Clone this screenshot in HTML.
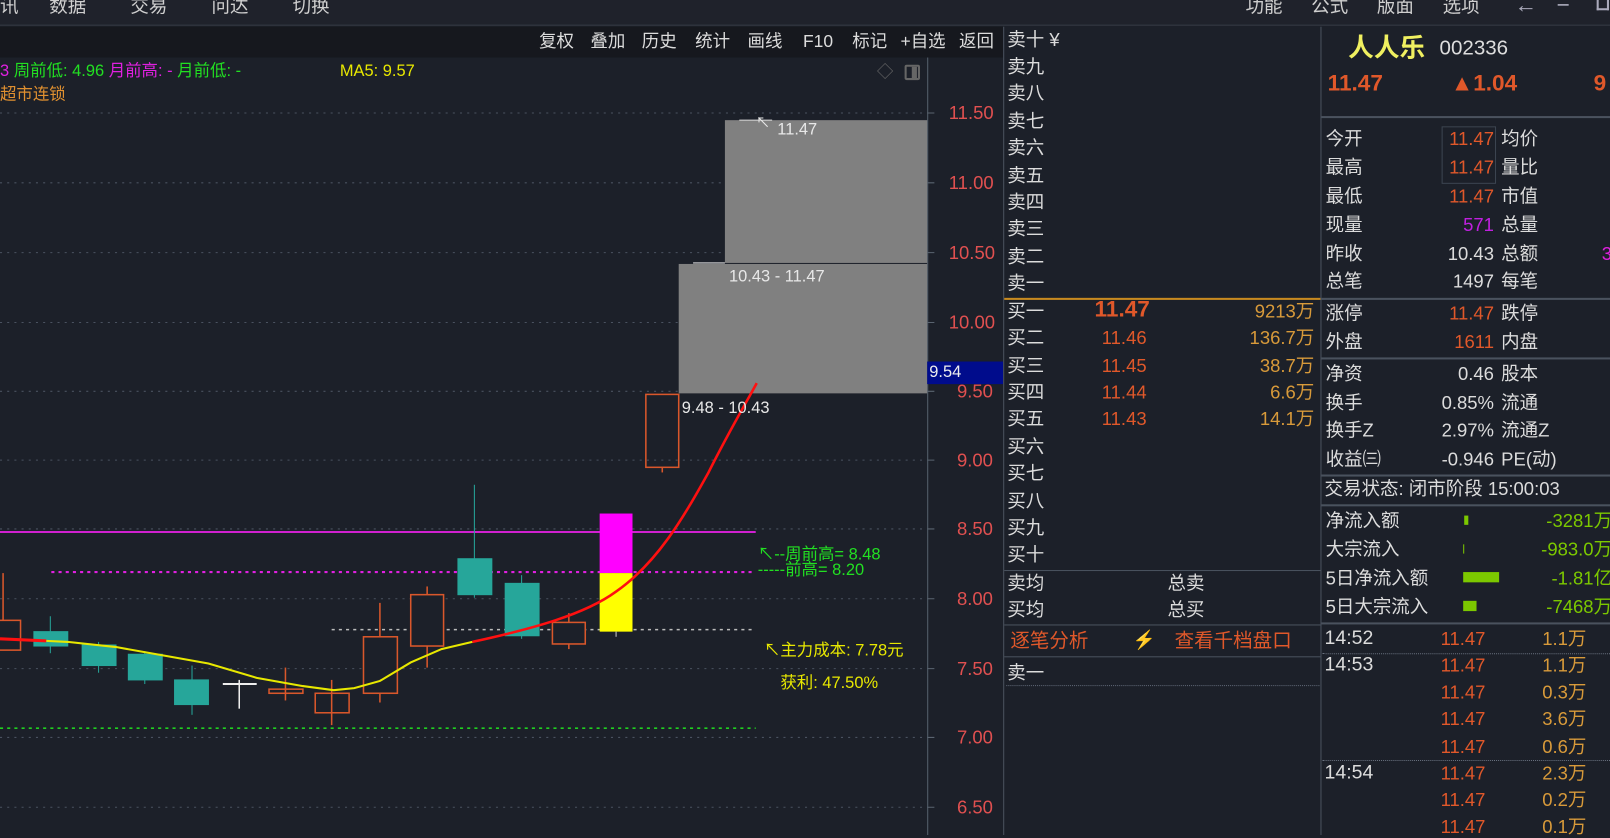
<!DOCTYPE html>
<html><head><meta charset="utf-8">
<style>
*{margin:0;padding:0;box-sizing:border-box}
html,body{width:1610px;height:835px;overflow:hidden;background:#1c2029}
#w{position:absolute;left:0;top:0;width:1568px;height:813px;transform:scale(1.02679,1.02706);transform-origin:0 0;background:#1c2029;font-family:"Liberation Sans","Noto Sans CJK SC",sans-serif;color:#dcdcdc}
.t{position:absolute;white-space:nowrap;font-size:18px;line-height:22px}
.r{text-align:right}
.hl{position:absolute;height:1px;background:#3c4450}
.vl{position:absolute;width:1px;background:#3c4450}
.dot{position:absolute;height:0;border-top:1px dotted #4a5260}
.o{color:#e0582a}.g{color:#d89a3a}.gr{color:#22e022}.m{color:#e020e0}.y{color:#e8e800}
.c{position:absolute}
</style></head><body><div id="w">
<div style="position:absolute;left:0;top:0;width:1568px;height:25px;background:#1f222b;border-bottom:1px solid #363c46"></div>
<div class="t" style="left:0;top:-5px;color:#cfcfcf">讯</div>
<div class="t" style="left:48px;top:-5px;color:#cfcfcf">数据</div>
<div class="t" style="left:127px;top:-5px;color:#cfcfcf">交易</div>
<div class="t" style="left:206px;top:-5px;color:#cfcfcf">问达</div>
<div class="t" style="left:285px;top:-5px;color:#cfcfcf">切换</div>
<div class="t" style="left:1213px;top:-5px;color:#cfcfcf">功能</div>
<div class="t" style="left:1277px;top:-5px;color:#cfcfcf">公式</div>
<div class="t" style="left:1341px;top:-5px;color:#cfcfcf">版面</div>
<div class="t" style="left:1405px;top:-5px;color:#cfcfcf">选项</div>
<div class="t" style="left:1475px;top:-6px;color:#aab;font-size:22px">←</div>
<div class="t" style="left:1516px;top:-6px;color:#aab;font-size:22px">−</div>
<div style="position:absolute;left:1555px;top:0;width:12px;height:10px;border:2px solid #aab;border-top:none"></div>
<div style="position:absolute;left:0;top:26px;width:977px;height:30px;background:#16181e"></div>
<div class="t" style="left:525px;top:30px;font-size:17px">复权</div>
<div class="t" style="left:575px;top:30px;font-size:17px">叠加</div>
<div class="t" style="left:625px;top:30px;font-size:17px">历史</div>
<div class="t" style="left:677px;top:30px;font-size:17px">统计</div>
<div class="t" style="left:728px;top:30px;font-size:17px">画线</div>
<div class="t" style="left:782px;top:30px;font-size:17px">F10</div>
<div class="t" style="left:830px;top:30px;font-size:17px">标记</div>
<div class="t" style="left:877px;top:30px;font-size:17px">+自选</div>
<div class="t" style="left:934px;top:30px;font-size:17px">返回</div>
<div class="t" style="left:0;top:59px;font-size:16px"><span class="m">3</span> <span class="gr">周前低: 4.96</span> <span class="m">月前高: -</span> <span class="gr">月前低: -</span></div>
<div class="t y" style="left:331px;top:59px;font-size:16px">MA5: 9.57</div>
<div class="t" style="left:0;top:82px;font-size:16px;color:#e09030">超市连锁</div>
<div class="t" style="left:854px;top:60px;color:#666;font-size:16px">◇</div>
<div style="position:absolute;left:881px;top:63px;width:15px;height:15px;border:2px solid #666;border-radius:2px"></div>
<div style="position:absolute;left:888px;top:65px;width:5px;height:11px;background:#666"></div>
<div class="vl" style="left:903px;top:56px;height:757px;background:#55606c"></div>
<svg class="c" style="left:0;top:0" width="978" height="813">
<g stroke="#4a5260" stroke-dasharray="2 5" stroke-width="1">
<line x1="0" y1="110" x2="903" y2="110"/><line x1="0" y1="178" x2="903" y2="178"/><line x1="0" y1="246" x2="903" y2="246"/><line x1="0" y1="314" x2="903" y2="314"/><line x1="0" y1="381" x2="903" y2="381"/><line x1="0" y1="448" x2="903" y2="448"/><line x1="0" y1="515" x2="903" y2="515"/><line x1="0" y1="583" x2="903" y2="583"/><line x1="0" y1="651" x2="903" y2="651"/><line x1="0" y1="718" x2="903" y2="718"/><line x1="0" y1="786" x2="903" y2="786"/>
</g>
<g stroke="#5a6470"><line x1="903" y1="110" x2="910" y2="110"/><line x1="903" y1="178" x2="910" y2="178"/><line x1="903" y1="246" x2="910" y2="246"/><line x1="903" y1="314" x2="910" y2="314"/><line x1="903" y1="381" x2="910" y2="381"/><line x1="903" y1="448" x2="910" y2="448"/><line x1="903" y1="515" x2="910" y2="515"/><line x1="903" y1="583" x2="910" y2="583"/><line x1="903" y1="651" x2="910" y2="651"/><line x1="903" y1="718" x2="910" y2="718"/><line x1="903" y1="786" x2="910" y2="786"/></g>
<rect x="706" y="117" width="197" height="139" fill="#808080"/>
<rect x="661" y="257" width="242" height="126" fill="#808080"/>
<line x1="720" y1="117" x2="752" y2="117" stroke="#ddd"/>
<line x1="675" y1="256" x2="706" y2="256" stroke="#ddd"/>
<line x1="0" y1="518" x2="736" y2="518" stroke="#d020d0" stroke-width="2"/>
<line x1="50" y1="557" x2="736" y2="557" stroke="#e020e0" stroke-width="2" stroke-dasharray="3 4"/>
<line x1="323" y1="613" x2="736" y2="613" stroke="#bbb" stroke-width="1.5" stroke-dasharray="3 4"/>
<line x1="0" y1="709" x2="736" y2="709" stroke="#20d020" stroke-width="1.5" stroke-dasharray="3 4"/>
<g stroke="#d9572b" stroke-width="1.5" fill="none">
<line x1="3" y1="558" x2="3" y2="604"/><rect x="-5" y="604" width="25" height="29"/>
<line x1="278" y1="650" x2="278" y2="682"/><rect x="262" y="671" width="33" height="4"/>
<line x1="323" y1="662" x2="323" y2="706"/><rect x="307" y="675" width="33" height="19"/>
<line x1="370" y1="587" x2="370" y2="684"/><rect x="354" y="620" width="33" height="55" fill="#1c2029"/>
<line x1="416" y1="571" x2="416" y2="650"/><rect x="400" y="579" width="32" height="50" fill="#1c2029"/>
<line x1="554" y1="597" x2="554" y2="632"/><rect x="538" y="606" width="32" height="21" fill="#1c2029"/>
<line x1="645" y1="455" x2="645" y2="460"/><rect x="629" y="384" width="32" height="71"/>
</g>
<g stroke="#26a69a" fill="#26a69a">
<line x1="49" y1="600" x2="49" y2="636"/><rect x="33" y="615" width="33" height="14"/>
<line x1="96" y1="625" x2="96" y2="655"/><rect x="80" y="628" width="33" height="20"/>
<line x1="141" y1="634" x2="141" y2="666"/><rect x="125" y="637" width="33" height="25"/>
<line x1="187" y1="648" x2="187" y2="696"/><rect x="170" y="662" width="33" height="24"/>
<line x1="462" y1="472" x2="462" y2="582"/><rect x="446" y="544" width="33" height="35"/>
<line x1="508" y1="560" x2="508" y2="622"/><rect x="492" y="568" width="33" height="51"/>
</g>
<line x1="217" y1="666" x2="250" y2="666" stroke="#eee" stroke-width="2"/><line x1="233" y1="662" x2="233" y2="690" stroke="#eee" stroke-width="1.5"/>
<rect x="584" y="500" width="32" height="58" fill="#ff00ff"/>
<rect x="584" y="558" width="32" height="57" fill="#ffff00"/>
<line x1="600" y1="615" x2="600" y2="620" stroke="#ccc"/>
<polyline points="45,624 66,625 113,630 158,638 203,646 250,660 295,668 325,672 345,670 370,663 400,645 430,632 460,625" fill="none" stroke="#e8e800" stroke-width="2"/>
<polyline points="0,622 45,624" fill="none" stroke="#ff1010" stroke-width="3"/>
<path d="M460,625 C520,612 570,598 600,576 C640,548 665,505 690,460 C710,420 725,395 737,373" fill="none" stroke="#ff1010" stroke-width="2.5"/>
</svg>
<div class="t" style="left:757px;top:116px;font-size:16px;color:#e8e8e8">11.47</div>
<div class="t" style="left:736px;top:108px;font-size:14px;color:#e8e8e8">↖</div>
<div class="t" style="left:710px;top:259px;font-size:16px;color:#e8e8e8">10.43 - 11.47</div>
<div class="t" style="left:664px;top:387px;font-size:16px;color:#e8e8e8">9.48 - 10.43</div>
<div class="t gr" style="left:738px;top:530px;font-size:16px">↖--周前高= 8.48</div>
<div class="t gr" style="left:738px;top:545px;font-size:16px">-----前高= 8.20</div>
<div class="t y" style="left:744px;top:623px;font-size:16px">↖主力成本: 7.78元</div>
<div class="t y" style="left:760px;top:655px;font-size:16px">获利: 47.50%</div>
<div class="t" style="left:924px;top:99px;color:#e05050">11.50</div>
<div class="t" style="left:924px;top:167px;color:#e05050">11.00</div>
<div class="t" style="left:924px;top:235px;color:#e05050">10.50</div>
<div class="t" style="left:924px;top:303px;color:#e05050">10.00</div>
<div class="t" style="left:932px;top:370px;color:#e05050">9.50</div>
<div class="t" style="left:932px;top:437px;color:#e05050">9.00</div>
<div class="t" style="left:932px;top:504px;color:#e05050">8.50</div>
<div class="t" style="left:932px;top:572px;color:#e05050">8.00</div>
<div class="t" style="left:932px;top:640px;color:#e05050">7.50</div>
<div class="t" style="left:932px;top:707px;color:#e05050">7.00</div>
<div class="t" style="left:932px;top:775px;color:#e05050">6.50</div>
<div style="position:absolute;left:903px;top:352px;width:74px;height:22px;background:#000c8c;color:#eee;font-size:16px;line-height:22px;padding-left:2px">9.54</div>
<div class="vl" style="left:977px;top:26px;height:787px;background:#4a525e"></div>
<div class="vl" style="left:1286px;top:26px;height:787px;background:#4a525e"></div>
<div class="t" style="left:981px;top:28px">卖十 ¥</div>
<div class="t" style="left:981px;top:54px">卖九</div>
<div class="t" style="left:981px;top:80px">卖八</div>
<div class="t" style="left:981px;top:107px">卖七</div>
<div class="t" style="left:981px;top:133px">卖六</div>
<div class="t" style="left:981px;top:160px">卖五</div>
<div class="t" style="left:981px;top:186px">卖四</div>
<div class="t" style="left:981px;top:212px">卖三</div>
<div class="t" style="left:981px;top:239px">卖二</div>
<div class="t" style="left:981px;top:265px">卖一</div>
<div class="hl" style="left:978px;top:290px;width:308px;height:2px;background:#c88a20"></div>
<div class="t" style="left:981px;top:292px">买一</div>
<div class="t" style="left:981px;top:318px">买二</div>
<div class="t" style="left:981px;top:345px">买三</div>
<div class="t" style="left:981px;top:371px">买四</div>
<div class="t" style="left:981px;top:397px">买五</div>
<div class="t" style="left:981px;top:424px">买六</div>
<div class="t" style="left:981px;top:450px">买七</div>
<div class="t" style="left:981px;top:477px">买八</div>
<div class="t" style="left:981px;top:503px">买九</div>
<div class="t" style="left:981px;top:529px">买十</div>
<div class="t o" style="left:1066px;top:290px;font-size:22px;font-weight:bold">11.47</div>
<div class="t o" style="left:1073px;top:318px">11.46</div>
<div class="t o" style="left:1073px;top:345px">11.45</div>
<div class="t o" style="left:1073px;top:371px">11.44</div>
<div class="t o" style="left:1073px;top:397px">11.43</div>
<div class="t g r" style="left:1180px;width:100px;top:292px">9213万</div>
<div class="t g r" style="left:1180px;width:100px;top:318px">136.7万</div>
<div class="t g r" style="left:1180px;width:100px;top:345px">38.7万</div>
<div class="t g r" style="left:1180px;width:100px;top:371px">6.6万</div>
<div class="t g r" style="left:1180px;width:100px;top:397px">14.1万</div>
<div class="hl" style="left:978px;top:555px;width:308px;background:#4a525e"></div>
<div class="t" style="left:981px;top:557px">卖均</div>
<div class="t" style="left:1137px;top:557px">总卖</div>
<div class="t" style="left:981px;top:583px">买均</div>
<div class="t" style="left:1137px;top:583px">总买</div>
<div class="hl" style="left:978px;top:608px;width:308px;background:#4a525e"></div>
<div class="t o" style="left:984px;top:614px;font-size:19px">逐笔分析</div>
<div class="t" style="left:1103px;top:612px;color:#888830;font-size:18px">⚡</div>
<div class="t o" style="left:1144px;top:614px;font-size:19px">查看千档盘口</div>
<div class="hl" style="left:978px;top:639px;width:308px;background:#4a525e"></div>
<div class="t" style="left:981px;top:644px">卖一</div>
<div class="dot" style="left:980px;top:667px;width:305px;border-color:#5a6270"></div>
<div class="t" style="left:1313px;top:32px;font-size:25px;line-height:30px;color:#f0f060;font-weight:bold">人人乐</div>
<div class="t" style="left:1402px;top:36px;font-size:20px;color:#ddd">002336</div>
<div class="t o" style="left:1293px;top:70px;font-size:22px;font-weight:bold">11.47</div>
<div class="t o" style="left:1413px;top:70px;font-size:22px;font-weight:bold">▲1.04</div>
<div class="t o" style="left:1552px;top:70px;font-size:22px;font-weight:bold">9</div>
<div class="hl" style="left:1287px;top:113px;width:281px;height:2px;background:#4a525e"></div>
<div style="position:absolute;left:1404px;top:123px;width:53px;height:56px;border:1px solid #3c4450"></div>
<div class="t" style="left:1291px;top:124px">今开</div><div class="t o r" style="left:1380px;width:75px;top:124px">11.47</div><div class="t" style="left:1462px;top:124px">均价</div>
<div class="t" style="left:1291px;top:152px">最高</div><div class="t o r" style="left:1380px;width:75px;top:152px">11.47</div><div class="t" style="left:1462px;top:152px">量比</div>
<div class="t" style="left:1291px;top:180px">最低</div><div class="t o r" style="left:1380px;width:75px;top:180px">11.47</div><div class="t" style="left:1462px;top:180px">市值</div>
<div class="t" style="left:1291px;top:208px">现量</div><div class="t r" style="left:1380px;width:75px;top:208px;color:#c020e0">571</div><div class="t" style="left:1462px;top:208px">总量</div>
<div class="t" style="left:1291px;top:236px">昨收</div><div class="t r" style="left:1380px;width:75px;top:236px">10.43</div><div class="t" style="left:1462px;top:236px">总额</div><div class="t m" style="left:1560px;top:236px">3</div>
<div class="t" style="left:1291px;top:263px">总笔</div><div class="t r" style="left:1380px;width:75px;top:263px">1497</div><div class="t" style="left:1462px;top:263px">每笔</div>
<div class="hl" style="left:1287px;top:290px;width:281px;height:2px;background:#4a525e"></div>
<div class="t" style="left:1291px;top:294px">涨停</div><div class="t o r" style="left:1380px;width:75px;top:294px">11.47</div><div class="t" style="left:1462px;top:294px">跌停</div>
<div class="t" style="left:1291px;top:322px">外盘</div><div class="t o r" style="left:1380px;width:75px;top:322px">1611</div><div class="t" style="left:1462px;top:322px">内盘</div>
<div class="hl" style="left:1287px;top:348px;width:281px;height:2px;background:#4a525e"></div>
<div class="t" style="left:1291px;top:353px">净资</div><div class="t r" style="left:1380px;width:75px;top:353px">0.46</div><div class="t" style="left:1462px;top:353px">股本</div>
<div class="t" style="left:1291px;top:381px">换手</div><div class="t r" style="left:1360px;width:95px;top:381px">0.85%</div><div class="t" style="left:1462px;top:381px">流通</div>
<div class="t" style="left:1291px;top:408px">换手Z</div><div class="t r" style="left:1360px;width:95px;top:408px">2.97%</div><div class="t" style="left:1462px;top:408px">流通Z</div>
<div class="t" style="left:1291px;top:436px">收益㈢</div><div class="t r" style="left:1360px;width:95px;top:436px">-0.946</div><div class="t" style="left:1462px;top:436px">PE(动)</div>
<div class="hl" style="left:1287px;top:462px;width:281px;height:2px;background:#4a525e"></div>
<div class="t" style="left:1290px;top:465px">交易状态: 闭市阶段 15:00:03</div>
<div class="hl" style="left:1287px;top:491px;width:281px;height:2px;background:#4a525e"></div>
<div class="t" style="left:1291px;top:496px">净流入额</div><div style="position:absolute;left:1426px;top:502px;width:4px;height:9px;background:#7cc800"></div><div class="t r" style="left:1460px;width:110px;top:496px;color:#7cc800">-3281万</div>
<div class="t" style="left:1291px;top:524px">大宗流入</div><div style="position:absolute;left:1425px;top:530px;width:1px;height:9px;background:#7cc800"></div><div class="t r" style="left:1460px;width:110px;top:524px;color:#7cc800">-983.0万</div>
<div class="t" style="left:1291px;top:552px">5日净流入额</div><div style="position:absolute;left:1425px;top:557px;width:35px;height:10px;background:#7cc800"></div><div class="t r" style="left:1460px;width:110px;top:552px;color:#7cc800">-1.81亿</div>
<div class="t" style="left:1291px;top:580px">5日大宗流入</div><div style="position:absolute;left:1425px;top:585px;width:13px;height:10px;background:#7cc800"></div><div class="t r" style="left:1460px;width:110px;top:580px;color:#7cc800">-7468万</div>
<div class="hl" style="left:1287px;top:606px;width:281px;height:2px;background:#4a525e"></div>
<div class="t" style="left:1290px;top:611px;font-size:19px">14:52</div><div class="t o" style="left:1403px;top:611px">11.47</div><div class="t g" style="left:1502px;top:611px">1.1万</div>
<div class="dot" style="left:1288px;top:636px;width:280px;border-color:#6a7280"></div>
<div class="t" style="left:1290px;top:637px;font-size:19px">14:53</div><div class="t o" style="left:1403px;top:637px">11.47</div><div class="t g" style="left:1502px;top:637px">1.1万</div>
<div class="t o" style="left:1403px;top:663px">11.47</div><div class="t g" style="left:1502px;top:663px">0.3万</div>
<div class="t o" style="left:1403px;top:689px">11.47</div><div class="t g" style="left:1502px;top:689px">3.6万</div>
<div class="t o" style="left:1403px;top:716px">11.47</div><div class="t g" style="left:1502px;top:716px">0.6万</div>
<div class="dot" style="left:1288px;top:740px;width:280px;border-color:#6a7280"></div>
<div class="t" style="left:1290px;top:742px;font-size:19px">14:54</div><div class="t o" style="left:1403px;top:742px">11.47</div><div class="t g" style="left:1502px;top:742px">2.3万</div>
<div class="t o" style="left:1403px;top:768px">11.47</div><div class="t g" style="left:1502px;top:768px">0.2万</div>
<div class="t o" style="left:1403px;top:794px">11.47</div><div class="t g" style="left:1502px;top:794px">0.1万</div>
</div></body></html>
